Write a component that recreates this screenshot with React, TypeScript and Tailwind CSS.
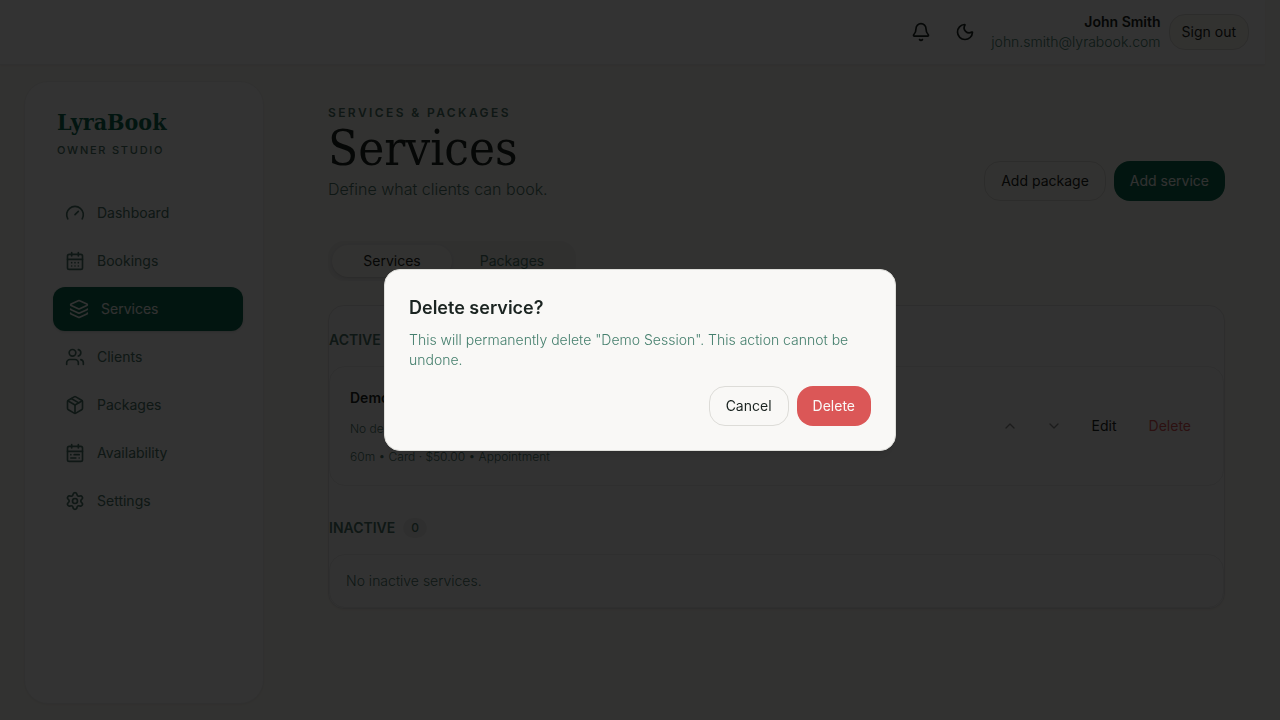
import {
  Bell,
  CalendarDays,
  CalendarRange,
  ChevronDown,
  ChevronUp,
  Gauge,
  Layers,
  Moon,
  Package,
  Settings,
  Users,
} from 'lucide-react';
import { clsx } from 'clsx';

const navItems = [
  { label: 'Dashboard', icon: Gauge },
  { label: 'Bookings', icon: CalendarDays },
  { label: 'Services', icon: Layers, active: true },
  { label: 'Clients', icon: Users },
  { label: 'Packages', icon: Package },
  { label: 'Availability', icon: CalendarRange },
  { label: 'Settings', icon: Settings },
];

function TopBar() {
  return (
    <header className="flex h-[65px] items-center justify-end gap-2 border-b border-[#f0f0ee] bg-[#fdfdfd] px-4 shadow-xs">
      <button aria-label="Notifications" className="flex size-9 items-center justify-center">
        <Bell className="size-5" />
      </button>
      <button aria-label="Toggle theme" className="flex size-9 items-center justify-center">
        <Moon className="size-5" />
      </button>
      <div className="text-right">
        <p className="text-sm font-semibold">John Smith</p>
        <p className="text-sm font-light text-[#457f6d]">john.smith@lyrabook.com</p>
      </div>
      <button className="h-9 rounded-2xl border border-[#dddcd8] bg-[#faf7ef] px-3 text-sm">
        Sign out
      </button>
    </header>
  );
}

function Sidebar() {
  return (
    <aside className="w-60 shrink-0 rounded-3xl border border-[#f0f0ee] bg-[#fdfdfd] p-6 shadow-xs">
      <div className="mb-8 px-2">
        <p className="font-['DejaVu_Serif_Condensed','DejaVu_Serif',serif] text-[23px] leading-8 font-bold text-[#0d6b4f]">
          LyraBook
        </p>
        <p className="mt-1 text-[11px] leading-[17px] font-medium tracking-[0.16em] text-[#4a7568]">OWNER STUDIO</p>
      </div>
      <nav className="flex flex-col gap-1">
        {navItems.map(({ label, icon: Icon, active }) => (
          <a
            key={label}
            href="#"
            className={clsx(
              'flex h-11 items-center gap-3 rounded-xl px-4 text-sm',
              active ? 'translate-x-1 bg-[#0d6b4f] text-[#f5f5f3] shadow-sm' : 'text-[#4a7568]',
            )}
          >
            <Icon className="size-5" />
            {label}
          </a>
        ))}
      </nav>
    </aside>
  );
}

function GroupLabel({ label, count }: { label: string; count: number }) {
  return (
    <div className="flex items-center gap-2">
      <h2 className="text-sm font-semibold text-[#4a7568]">{label}</h2>
      <span className="rounded-full bg-[#ececea] px-2 text-xs leading-5 font-medium text-[#4a7568]">{count}</span>
    </div>
  );
}

function ServiceCard() {
  return (
    <article className="mt-4 flex items-center justify-between rounded-2xl border border-[#e8e8e8] p-5">
      <div className="flex flex-col gap-3">
        <h3 className="text-sm leading-[22px] font-semibold">Demo Session</h3>
        <p className="text-xs font-light text-[#4a7568]">No description</p>
        <p className="text-xs font-light text-[#4a7568]">60m • Card · $50.00 • Appointment</p>
      </div>
      <div className="flex items-center gap-2 text-sm">
        <button aria-label="Move up" disabled className="flex size-9 items-center justify-center opacity-50">
          <ChevronUp className="size-4" />
        </button>
        <button aria-label="Move down" disabled className="flex size-9 items-center justify-center opacity-50">
          <ChevronDown className="size-4" />
        </button>
        <button className="h-9 px-3">Edit</button>
        <button className="h-9 px-3 text-[#db5757]">Delete</button>
      </div>
    </article>
  );
}

function DeleteDialog() {
  return (
    <div className="fixed inset-0 z-50 flex items-center justify-center bg-black/80">
      <div
        role="dialog"
        aria-modal="true"
        aria-labelledby="delete-title"
        className="w-full max-w-lg rounded-2xl border border-[#dededa] bg-[#f9f8f6] p-6 shadow-lg"
      >
        <h2 id="delete-title" className="text-lg font-semibold">
          Delete service?
        </h2>
        <p className="mt-2 text-sm font-light text-[#457f6d]">
          This will permanently delete "Demo Session". This action cannot be undone.
        </p>
        <div className="mt-4 flex justify-end gap-2 text-sm">
          <button className="h-10 rounded-2xl border border-[#dddcd8] px-4">Cancel</button>
          <button className="h-10 rounded-2xl bg-[#db5757] px-4 text-[#faf9f7]">Delete</button>
        </div>
      </div>
    </div>
  );
}

export default function App() {
  return (
    <div className="flex min-h-screen flex-col bg-[#fbf9f3] pr-[15px] font-['Inter',sans-serif] text-[#1b2421]">
      <TopBar />
      <div className="flex flex-1 gap-6 py-4 pl-6">
        <Sidebar />
        <main className="flex-1 px-10 py-6">
          <div className="flex items-end justify-between">
            <div className="flex flex-col gap-1">
              <p className="text-xs font-semibold tracking-[0.2em] text-[#4a7568]">SERVICES &amp; PACKAGES</p>
              <h1 className="font-['DejaVu_Serif_Condensed','DejaVu_Serif',serif] text-[49px] leading-[48px]">
                Services
              </h1>
              <p className="text-base font-light text-[#4a7568]">Define what clients can book.</p>
            </div>
            <div className="flex gap-2 text-sm">
              <button className="h-10 rounded-2xl border border-[#dddcd8] px-4">Add package</button>
              <button className="h-10 rounded-2xl bg-[#0d6b4f] px-4 text-[#f5f5f3]">Add service</button>
            </div>
          </div>

          <div role="tablist" className="mt-10 inline-flex rounded-2xl bg-[#ededec] p-1 text-sm">
            <button role="tab" aria-selected="true" className="h-8 w-30 rounded-2xl bg-[#fbf9f3] shadow-sm">
              Services
            </button>
            <button role="tab" aria-selected="false" className="h-8 w-30 text-[#4a7568]">
              Packages
            </button>
          </div>

          <section className="mt-6 rounded-2xl border border-[#e1e1e0] bg-[#fbfbfb] pt-6 shadow-xs">
            <GroupLabel label="ACTIVE" count={1} />
            <ServiceCard />
            <div className="mt-8">
              <GroupLabel label="INACTIVE" count={0} />
            </div>
            <p className="mt-4 rounded-2xl border border-[#e8e8e8] p-4 text-sm font-light text-[#4a7568]">
              No inactive services.
            </p>
          </section>
        </main>
      </div>

      <DeleteDialog />
    </div>
  );
}
